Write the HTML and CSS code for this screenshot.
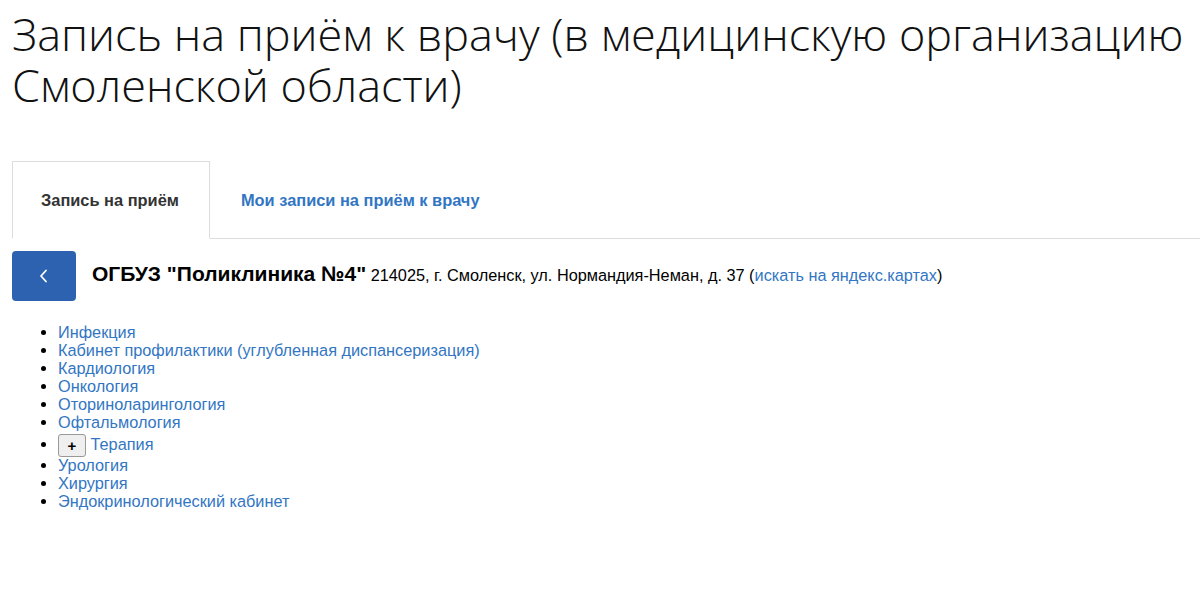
FILE: index.html
```html
<!DOCTYPE html>
<html lang="ru">
<head>
    <meta charset="UTF-8">
    <meta name="viewport" content="width=device-width, initial-scale=1.0">
    <title>Запись на приём к врачу</title>
    <link rel="stylesheet" href="styles.css">
</head>
<body>
    <div class="page">
        <h1 class="page-title">Запись на приём к врачу (в медицинскую организацию Смоленской области)</h1>

        <ul class="tabs">
            <li class="tab active"><a href="#">Запись на приём</a></li>
            <li class="tab"><a href="#">Мои записи на приём к врачу</a></li>
        </ul>

        <div class="org">
            <a href="#" class="back-btn" aria-label="Назад">
                <svg width="12" height="16" viewBox="0 0 12 16">
                    <path d="M8 2.5 L3 8 L8 13.5" fill="none" stroke="#fff" stroke-width="1.8" stroke-linecap="round" stroke-linejoin="round"/>
                </svg>
            </a>
            <div class="org-info">
                <span class="org-name">ОГБУЗ "Поликлиника №4"</span>
                214025, г. Смоленск, ул. Нормандия-Неман, д. 37 (<a href="#">искать на яндекс.картах</a>)
            </div>
        </div>

        <ul class="specialties">
            <li><a href="#">Инфекция</a></li>
            <li><a href="#">Кабинет профилактики (углубленная диспансеризация)</a></li>
            <li><a href="#">Кардиология</a></li>
            <li><a href="#">Онкология</a></li>
            <li><a href="#">Оториноларингология</a></li>
            <li><a href="#">Офтальмология</a></li>
            <li class="group"><button class="toggle">+</button> <a href="#">Терапия</a></li>
            <li><a href="#">Урология</a></li>
            <li><a href="#">Хирургия</a></li>
            <li><a href="#">Эндокринологический кабинет</a></li>
        </ul>
    </div>
</body>
</html>
```

FILE: styles.css
```css
body {
    margin: 0;
    padding: 0;
    background: #fff;
    color: #000;
    font-family: "Liberation Sans", Arial, sans-serif;
    font-size: 16px;
    overflow: hidden;
}
a {
    color: #3276c3;
    text-decoration: none;
}
.page {
    padding: 0 0 0 12px;
}
.page-title {
    margin: 0;
    padding-top: 8px;
    font-family: "Open Sans", "Noto Sans", sans-serif;
    font-weight: 300;
    font-size: 45px;
    line-height: 51px;
    color: #111;
}
.tabs {
    list-style: none;
    display: flex;
    margin: 51px 0 0 0;
    padding: 0;
    border-bottom: 1px solid #ddd;
}
.tab a {
    display: block;
    padding: 28px 30px 28px;
    font-weight: bold;
    font-size: 16.4px;
    line-height: 20px;
    border: 1px solid transparent;
    margin-bottom: -1px;
}
.tab.active a {
    color: #333;
    border-color: #ddd;
    border-bottom-color: #fff;
    background: #fff;
    padding-left: 28px;
    padding-right: 30px;
}
.org {
    display: flex;
    align-items: center;
    margin-top: 12px;
}
.back-btn {
    display: flex;
    align-items: center;
    justify-content: center;
    width: 64px;
    height: 50px;
    background: #2d62b0;
    border-radius: 4px;
    flex-shrink: 0;
}
.org-info {
    margin-left: 16px;
    margin-top: -4px;
    font-size: 16.3px;
}
.org-name {
    font-weight: bold;
    font-size: 21px;
}
.specialties {
    margin: 22px 0 0 0;
    padding-left: 46px;
    font-size: 16.3px;
    line-height: 18px;
}
.specialties li.group {
    margin-top: 1px;
    height: 24px;
    line-height: 24px;
}
.toggle {
    font-family: "Liberation Sans", Arial, sans-serif;
    font-size: 15px;
    font-weight: bold;
    width: 28px;
    height: 23px;
    padding: 0;
    border: 1px solid #999;
    border-radius: 3px;
    background: #efefef;
    color: #000;
    vertical-align: middle;
}
```
